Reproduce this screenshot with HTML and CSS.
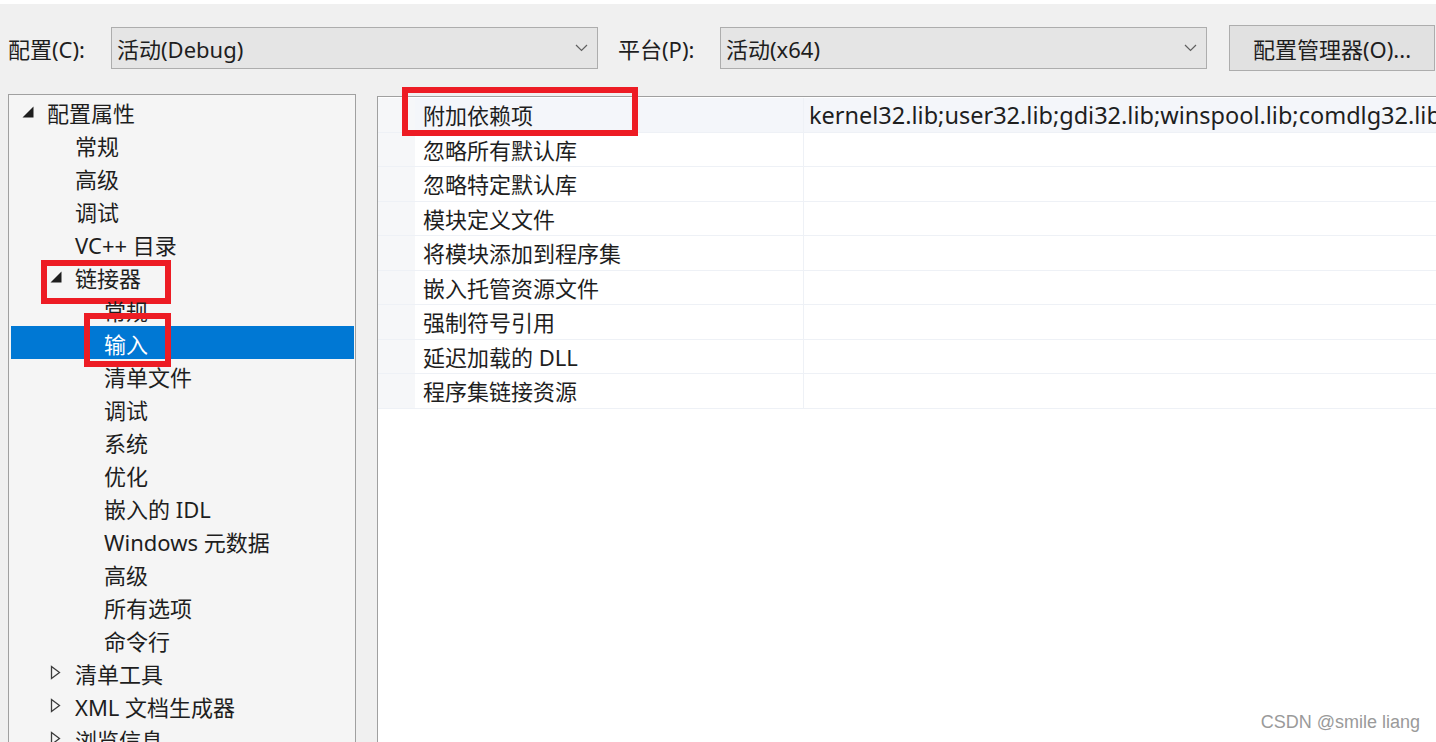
FILE: index.html
```html
<!DOCTYPE html>
<html lang="zh-CN">
<head>
    <meta charset="UTF-8">
    <meta name="viewport" content="width=device-width, initial-scale=1.0">
    <title>属性页</title>
    <link rel="stylesheet" href="styles.css">
</head>
<body>
    <div class="topbar">
        <span class="label">配置(C):</span>
        <div class="combo">
            <span>活动(Debug)</span>
            <svg class="chev" width="13" height="8" viewBox="0 0 13 8"><path d="M1 1L6.5 6.5L12 1" fill="none" stroke="#606060" stroke-width="1.2"/></svg>
        </div>
        <span class="label label-plat">平台(P):</span>
        <div class="combo">
            <span>活动(x64)</span>
            <svg class="chev" width="13" height="8" viewBox="0 0 13 8"><path d="M1 1L6.5 6.5L12 1" fill="none" stroke="#606060" stroke-width="1.2"/></svg>
        </div>
        <div class="btn">配置管理器(O)...</div>
    </div>

    <div class="main">
        <div class="tree">
            <ul>
                <li class="node lv0"><span class="tog"><svg width="12" height="12" viewBox="0 0 12 12"><path d="M11.5 0.5V11.5H0.5Z" fill="#1e1e1e"/></svg></span><span>配置属性</span></li>
                <li class="node lv1"><span class="tog"></span><span>常规</span></li>
                <li class="node lv1"><span class="tog"></span><span>高级</span></li>
                <li class="node lv1"><span class="tog"></span><span>调试</span></li>
                <li class="node lv1"><span class="tog"></span><span>VC++ 目录</span></li>
                <li class="node lv1 mark-linker"><span class="tog"><svg width="12" height="12" viewBox="0 0 12 12"><path d="M11.5 0.5V11.5H0.5Z" fill="#1e1e1e"/></svg></span><span>链接器</span><i class="redbox"></i></li>
                <li class="node lv2"><span class="tog"></span><span>常规</span></li>
                <li class="node lv2 active mark-input"><span class="tog"></span><span>输入</span><i class="redbox"></i></li>
                <li class="node lv2"><span class="tog"></span><span>清单文件</span></li>
                <li class="node lv2"><span class="tog"></span><span>调试</span></li>
                <li class="node lv2"><span class="tog"></span><span>系统</span></li>
                <li class="node lv2"><span class="tog"></span><span>优化</span></li>
                <li class="node lv2"><span class="tog"></span><span>嵌入的 IDL</span></li>
                <li class="node lv2"><span class="tog"></span><span>Windows 元数据</span></li>
                <li class="node lv2"><span class="tog"></span><span>高级</span></li>
                <li class="node lv2"><span class="tog"></span><span>所有选项</span></li>
                <li class="node lv2"><span class="tog"></span><span>命令行</span></li>
                <li class="node lv1"><span class="tog"><svg width="11" height="15" viewBox="0 0 11 15"><path d="M1.5 1.5L9.5 7.5L1.5 13.5Z" fill="none" stroke="#3c3c3c" stroke-width="1.3"/></svg></span><span>清单工具</span></li>
                <li class="node lv1"><span class="tog"><svg width="11" height="15" viewBox="0 0 11 15"><path d="M1.5 1.5L9.5 7.5L1.5 13.5Z" fill="none" stroke="#3c3c3c" stroke-width="1.3"/></svg></span><span>XML 文档生成器</span></li>
                <li class="node lv1"><span class="tog"><svg width="11" height="15" viewBox="0 0 11 15"><path d="M1.5 1.5L9.5 7.5L1.5 13.5Z" fill="none" stroke="#3c3c3c" stroke-width="1.3"/></svg></span><span>浏览信息</span></li>
            </ul>
        </div>

        <div class="grid">
            <div class="row first">
                <div class="gutter"></div>
                <div class="name">附加依赖项<i class="redbox"></i></div>
                <div class="val">kernel32.lib;user32.lib;gdi32.lib;winspool.lib;comdlg32.lib</div>
            </div>
            <div class="row"><div class="gutter"></div><div class="name">忽略所有默认库</div><div class="val"></div></div>
            <div class="row"><div class="gutter"></div><div class="name">忽略特定默认库</div><div class="val"></div></div>
            <div class="row"><div class="gutter"></div><div class="name">模块定义文件</div><div class="val"></div></div>
            <div class="row"><div class="gutter"></div><div class="name">将模块添加到程序集</div><div class="val"></div></div>
            <div class="row"><div class="gutter"></div><div class="name">嵌入托管资源文件</div><div class="val"></div></div>
            <div class="row"><div class="gutter"></div><div class="name">强制符号引用</div><div class="val"></div></div>
            <div class="row"><div class="gutter"></div><div class="name">延迟加载的 DLL</div><div class="val"></div></div>
            <div class="row"><div class="gutter"></div><div class="name">程序集链接资源</div><div class="val"></div></div>
        </div>
    </div>

    <div class="watermark">CSDN @smile liang</div>
</body>
</html>
```

FILE: styles.css
```css
*{
    padding: 0;
    margin: 0;
    box-sizing: border-box;
}
li{
    list-style: none;
}
html, body{
    height: 100%;
    overflow: hidden;
}
body{
    background-color: #f0f0f0;
    font-family: "Noto Sans", "Noto Sans CJK SC", sans-serif;
    font-size: 22px;
    color: #1e1e1e;
    position: relative;
}

/* 顶部工具条 */
.topbar{
    height: 92px;
    border-top: 4px solid #fff;
    display: flex;
    align-items: center;
    padding-left: 8px;
}
.label{
    width: 103px;
    flex: none;
    white-space: nowrap;
}
.label-plat{
    margin-left: 20px;
    width: 102px;
}
.combo{
    width: 487px;
    height: 42px;
    flex: none;
    background-color: #e5e5e5;
    border: 1px solid #adadad;
    display: flex;
    align-items: center;
    justify-content: space-between;
    padding: 0 9px 0 5px;
}
.chev{
    display: block;
}
.btn{
    margin-left: 22px;
    width: 206px;
    height: 46px;
    flex: none;
    background-color: #e1e1e1;
    border: 1px solid #adadad;
    display: flex;
    align-items: center;
    justify-content: center;
    white-space: nowrap;
}

/* 主体 */
.main{
    display: flex;
    align-items: flex-start;
    padding-left: 8px;
    margin-top: 2px;
}
.tree{
    width: 348px;
    flex: none;
    height: 700px;
    border: 1px solid #a0a0a0;
    background-color: #f5f5f5;
    padding: 0 1px 0 2px;
}
.node{
    height: 33px;
    display: flex;
    align-items: center;
    white-space: nowrap;
    position: relative;
}
.tog{
    width: 25px;
    flex: none;
    display: flex;
    align-items: center;
}
.lv0{
    padding-left: 11px;
}
.lv1{
    padding-left: 39px;
}
.lv2{
    padding-left: 68px;
}
.tree .active{
    background-color: #0078d4;
    color: #fff;
}

.grid{
    flex: 1;
    min-width: 0;
    height: 700px;
    margin-left: 21px;
    margin-top: 2px;
    background-color: #fff;
    border-top: 1px solid #a0a0a0;
    border-left: 1px solid #a0a0a0;
    padding-top: 1px;
}
.row{
    display: flex;
    height: 34.5px;
    border-bottom: 1px solid #eef1f6;
    white-space: nowrap;
}
.gutter{
    width: 37px;
    flex: none;
    background-color: #f6f7f9;
}
.name{
    width: 388px;
    flex: none;
    padding: 1px 0 0 8px;
    line-height: 33px;
    position: relative;
}
.val{
    flex: 1;
    min-width: 0;
    padding: 1px 0 0 5px;
    line-height: 33px;
    font-size: 23.5px;
    border-left: 1px solid #eef1f6;
    overflow: hidden;
}
.row.first .name, .row.first .val{
    background-color: #f4f6fa;
}

/* 红框标注 */
.redbox{
    position: absolute;
    border: 6px solid #ed1c24;
}
.mark-linker .redbox{
    left: 30px;
    top: 0;
    width: 130px;
    height: 44px;
}
.mark-input .redbox{
    left: 73px;
    top: -13px;
    width: 87px;
    height: 54px;
}
.name .redbox{
    left: -13px;
    top: -11px;
    width: 236px;
    height: 49px;
}

.watermark{
    position: absolute;
    right: 16px;
    bottom: 9px;
    font-family: "Liberation Sans", Arial, sans-serif;
    font-size: 18px;
    color: #9a9a9a;
    text-shadow: 0 0 1px #fff;
}
```
